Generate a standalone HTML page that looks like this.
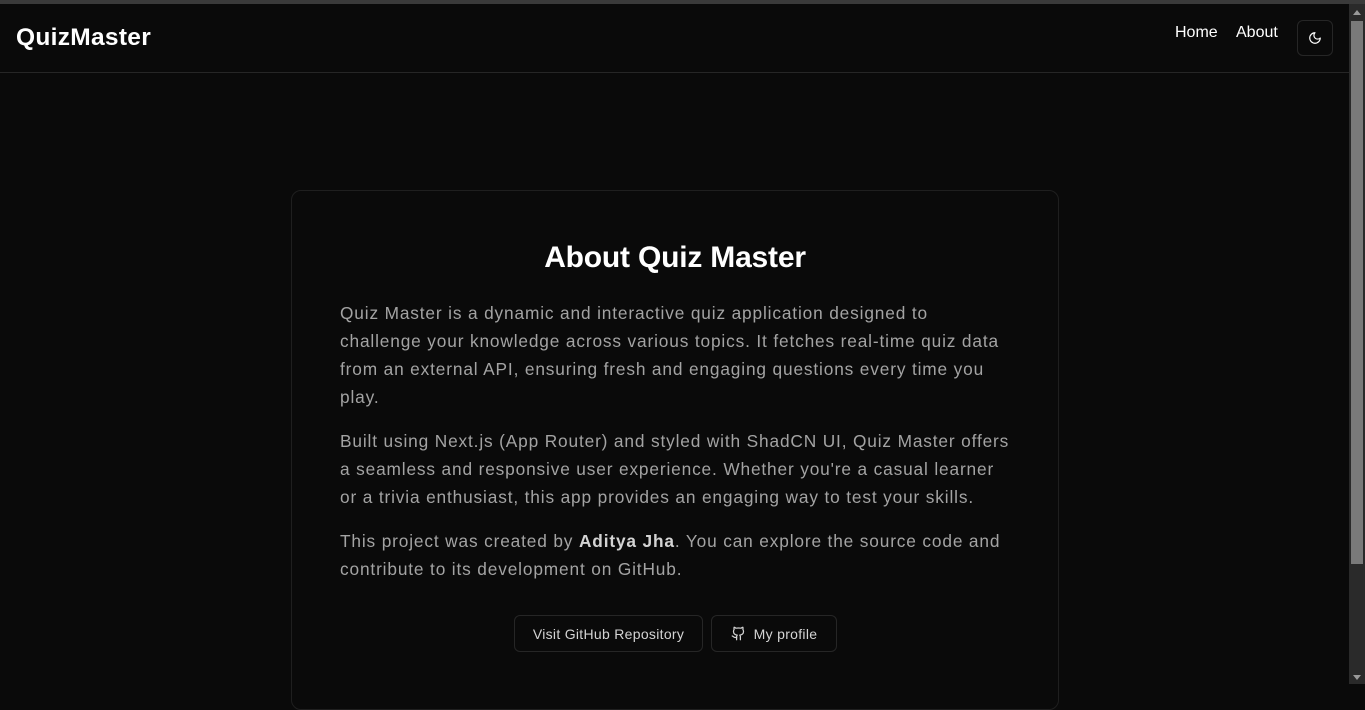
<!DOCTYPE html>
<html><head><meta charset="utf-8"><style>
*{box-sizing:border-box;margin:0;padding:0}
html,body{width:1365px;height:684px;overflow:hidden;background:#0a0a0a;font-family:"Liberation Sans",sans-serif}
.topbar{position:absolute;left:0;top:0;width:1365px;height:4px;background:#3a3a3a}
.sb{position:absolute;right:0;top:4px;width:16px;height:680px;background:#2a2a2a}
.sb .th{position:absolute;left:2px;top:17px;width:12px;height:543px;background:#7a7a7a}
.sb .up{position:absolute;left:4px;top:6px;width:0;height:0;border-left:4px solid transparent;border-right:4px solid transparent;border-bottom:5px solid #9a9a9a}
.sb .dn{position:absolute;left:4px;bottom:4px;width:0;height:0;border-left:4px solid transparent;border-right:4px solid transparent;border-top:5px solid #9a9a9a}
header{position:absolute;left:0;top:4px;width:1349px;height:69px;border-bottom:1px solid #262626}
.logo{position:absolute;left:16px;top:20px;color:#fff;font-weight:bold;font-size:24.5px;letter-spacing:0.3px}
.nav{position:absolute;top:20px;color:#fff;font-size:16px}
.tb{position:absolute;left:1297px;top:16px;width:36px;height:36px;border:1px solid #262626;border-radius:6px;display:flex;align-items:center;justify-content:center}
.card{position:absolute;left:291px;top:190px;width:768px;height:520px;border:1px solid #1f1f1f;border-radius:10px}
h1{position:absolute;left:0;width:100%;top:50px;text-align:center;color:#fff;font-size:30px;font-weight:bold;letter-spacing:-0.2px}
.txt{position:absolute;left:48px;width:720px;top:108px;color:#a3a3a3;font-size:17.3px;line-height:28px;white-space:nowrap;letter-spacing:0.85px}
.txt p{margin-bottom:16px}
.txt b{color:#d4d4d4;font-weight:bold}
.btn{position:absolute;top:424px;height:37px;border:1px solid #262626;border-radius:6px;color:#d4d4d4;font-size:14px;display:flex;align-items:center;justify-content:center;gap:8px;letter-spacing:0.3px}
</style></head><body>
<div class="topbar"></div>
<header>
<div class="logo">QuizMaster</div>
<div class="nav" style="left:1175px">Home</div>
<div class="nav" style="left:1236px">About</div>
<div class="tb"><svg width="14" height="14" viewBox="0 0 24 24" fill="none" stroke="#fff" stroke-width="2" stroke-linecap="round" stroke-linejoin="round"><path d="M12 3a6 6 0 0 0 9 9 9 9 0 1 1-9-9Z"/></svg></div>
</header>
<div class="card">
<h1>About Quiz Master</h1>
<div class="txt">
<p>Quiz Master is a dynamic and interactive quiz application designed to<br>challenge your knowledge across various topics. It fetches real-time quiz data<br>from an external API, ensuring fresh and engaging questions every time you<br>play.</p>
<p>Built using Next.js (App Router) and styled with ShadCN UI, Quiz Master offers<br>a seamless and responsive user experience. Whether you're a casual learner<br>or a trivia enthusiast, this app provides an engaging way to test your skills.</p>
<p>This project was created by <b>Aditya Jha</b>. You can explore the source code and<br>contribute to its development on GitHub.</p>
</div>
<div class="btn" style="left:222px;width:189px">Visit GitHub Repository</div>
<div class="btn" style="left:419px;width:126px"><svg width="15" height="15" viewBox="0 0 24 24" fill="none" stroke="#d4d4d4" stroke-width="2" stroke-linecap="round" stroke-linejoin="round"><path d="M15 22v-4a4.8 4.8 0 0 0-1-3.5c3 0 6-2 6-5.5.08-1.25-.27-2.48-1-3.5.28-1.15.28-2.35 0-3.5 0 0-1 0-3 1.5-2.64-.5-5.36-.5-8 0C6 2 5 2 5 2c-.3 1.15-.3 2.35 0 3.5A5.4 5.4 0 0 0 4 9c0 3.5 3 5.5 6 5.5-.39.49-.68 1.05-.85 1.65-.17.6-.22 1.23-.15 1.85v4"/><path d="M9 18c-4.51 2-5-2-7-2"/></svg>My profile</div>
</div>
<div class="sb"><div class="up"></div><div class="th"></div><div class="dn"></div></div>
</body></html>
